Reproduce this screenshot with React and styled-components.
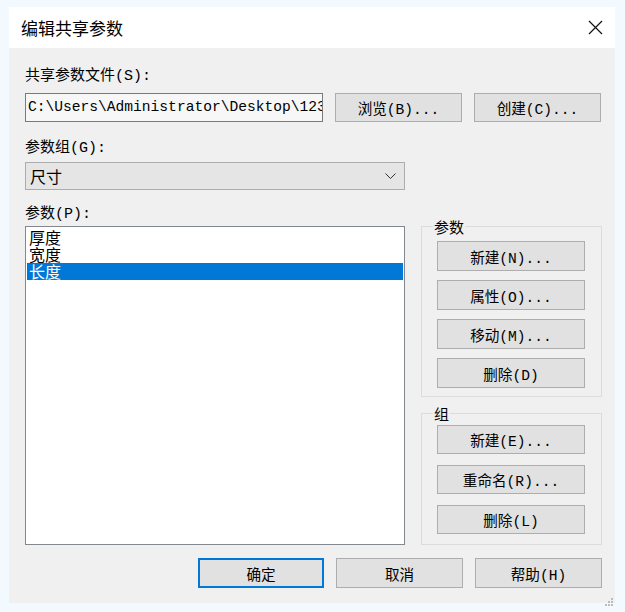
import styled, { createGlobalStyle } from 'styled-components'

const GlobalStyle = createGlobalStyle`
  html, body {
    margin: 0;
    padding: 0;
    background: #f3faff;
  }
  body {
    font-family: "Liberation Mono", "Noto Sans CJK SC", monospace;
    color: #000;
  }
`

const Page = styled.div`
  width: 625px;
  height: 612px;
  padding: 7px 10px 0 9px;
  box-sizing: border-box;
`

const Window = styled.div`
  width: 606px;
  height: 596px;
  display: flex;
  flex-direction: column;
  position: relative;
`

const TitleBar = styled.div`
  height: 41px;
  background: #ffffff;
  display: flex;
  align-items: center;
  justify-content: space-between;
  padding: 0 12px 0 12px;
  font-family: "Noto Sans CJK SC", sans-serif;
  font-size: 17px;
`

const CloseButton = styled.div`
  width: 16px;
  height: 16px;
  display: flex;
  align-items: center;
  justify-content: center;
`

const Body = styled.div`
  flex: 1;
  background: #f0f0f0;
  padding: 18px 13px 15px 16px;
  display: flex;
  flex-direction: column;
`

const Label = styled.div`
  height: 18px;
  line-height: 22px;
  font-size: 15px;
  margin-top: ${({ $top }) => $top || 0}px;
  white-space: nowrap;
`

const Row = styled.div`
  display: flex;
  gap: 12px;
  margin-top: ${({ $top }) => $top || 0}px;
  justify-content: ${({ $end }) => ($end ? 'flex-end' : 'flex-start')};
`

const PathInput = styled.div`
  width: 298px;
  height: 29px;
  box-sizing: border-box;
  border: 1px solid #7a7a7a;
  background: #f7f7f7;
  padding-left: 2px;
  font-size: 14.6px;
  line-height: 27px;
  white-space: nowrap;
  overflow: hidden;
`

const Button = styled.div`
  width: ${({ $w }) => $w || 127}px;
  height: ${({ $h }) => $h || 30}px;
  box-sizing: border-box;
  background: #e1e1e1;
  border: ${({ $default }) => ($default ? '2px solid #0078d7' : '1px solid #adadad')};
  display: flex;
  align-items: center;
  justify-content: center;
  font-size: 14.6px;
  white-space: nowrap;
`

const Select = styled.div`
  width: 380px;
  height: 28px;
  margin-top: 6px;
  box-sizing: border-box;
  background: #e5e5e5;
  border: 1px solid #acacac;
  display: flex;
  align-items: center;
  justify-content: space-between;
  padding: 0 8px 0 4px;
  font-family: "Noto Sans CJK SC", sans-serif;
  font-size: 16px;
`

const Main = styled.div`
  display: flex;
  gap: 16px;
  margin-top: 4px;
`

const ListBox = styled.div`
  width: 380px;
  height: 319px;
  box-sizing: border-box;
  background: #ffffff;
  border: 1px solid #828790;
  padding: 2px 1px;
`

const ListItem = styled.div`
  height: 17px;
  line-height: 16px;
  padding-left: 2px;
  font-family: "Noto Sans CJK SC", sans-serif;
  font-size: 16px;
  background: ${({ $selected }) => ($selected ? '#0078d7' : 'transparent')};
  color: ${({ $selected }) => ($selected ? '#ffffff' : '#000000')};
`

const Side = styled.div`
  width: 181px;
  display: flex;
  flex-direction: column;
  gap: 16px;
`

const GroupBox = styled.div`
  position: relative;
  height: ${({ $h }) => $h}px;
  box-sizing: border-box;
  border: 1px solid #dcdcdc;
  padding: ${({ $pt }) => $pt}px 0 0 15px;
  display: flex;
  flex-direction: column;
  gap: ${({ $gap }) => $gap}px;
`

const Caption = styled.div`
  position: absolute;
  top: -9px;
  left: 11px;
  padding: 0 1px;
  background: #f0f0f0;
  font-family: "Noto Sans CJK SC", sans-serif;
  font-size: 15px;
  line-height: 18px;
`

const Grip = styled.div`
  position: absolute;
  right: 2px;
  bottom: 2px;
  width: 8px;
  height: 8px;
`

const paramButtons = ['新建(N)...', '属性(O)...', '移动(M)...', '删除(D)']
const groupButtons = ['新建(E)...', '重命名(R)...', '删除(L)']
const items = ['厚度', '宽度', '长度']

function App() {
  return (
    <Page>
      <GlobalStyle />
      <Window>
        <TitleBar>
          <span>编辑共享参数</span>
          <CloseButton>
            <svg width="15" height="15" viewBox="0 0 15 15">
              <path d="M1 1 L14 14 M14 1 L1 14" stroke="#111" strokeWidth="1.2" fill="none" />
            </svg>
          </CloseButton>
        </TitleBar>
        <Body>
          <Label>共享参数文件(S):</Label>
          <Row $top={9}>
            <PathInput>C:\Users\Administrator\Desktop\123.txt</PathInput>
            <Button $h={29}>浏览(B)...</Button>
            <Button $h={29}>创建(C)...</Button>
          </Row>
          <Label $top={16}>参数组(G):</Label>
          <Select>
            <span>尺寸</span>
            <svg width="11" height="6" viewBox="0 0 11 6">
              <path d="M0.5 0.5 L5.5 5.5 L10.5 0.5" stroke="#333" strokeWidth="1" fill="none" />
            </svg>
          </Select>
          <Label $top={14}>参数(P):</Label>
          <Main>
            <ListBox>
              {items.map((item, index) => (
                <ListItem key={item} $selected={index === 2}>{item}</ListItem>
              ))}
            </ListBox>
            <Side>
              <GroupBox $h={171} $pt={14} $gap={9}>
                <Caption>参数</Caption>
                {paramButtons.map((label) => (
                  <Button key={label} $w={148}>{label}</Button>
                ))}
              </GroupBox>
              <GroupBox $h={132} $pt={11} $gap={11}>
                <Caption>组</Caption>
                {groupButtons.map((label) => (
                  <Button key={label} $w={148} $h={29}>{label}</Button>
                ))}
              </GroupBox>
            </Side>
          </Main>
          <Row $top={13} $end>
            <Button $w={126} $default>确定</Button>
            <Button>取消</Button>
            <Button>帮助(H)</Button>
          </Row>
        </Body>
        <Grip>
          <svg width="8" height="8" viewBox="0 0 8 8">
            <rect x="6" y="0" width="2" height="2" fill="#bcbcbc" />
            <rect x="3" y="3" width="2" height="2" fill="#bcbcbc" />
            <rect x="6" y="3" width="2" height="2" fill="#bcbcbc" />
            <rect x="0" y="6" width="2" height="2" fill="#bcbcbc" />
            <rect x="3" y="6" width="2" height="2" fill="#bcbcbc" />
            <rect x="6" y="6" width="2" height="2" fill="#bcbcbc" />
          </svg>
        </Grip>
      </Window>
    </Page>
  )
}

export default App
